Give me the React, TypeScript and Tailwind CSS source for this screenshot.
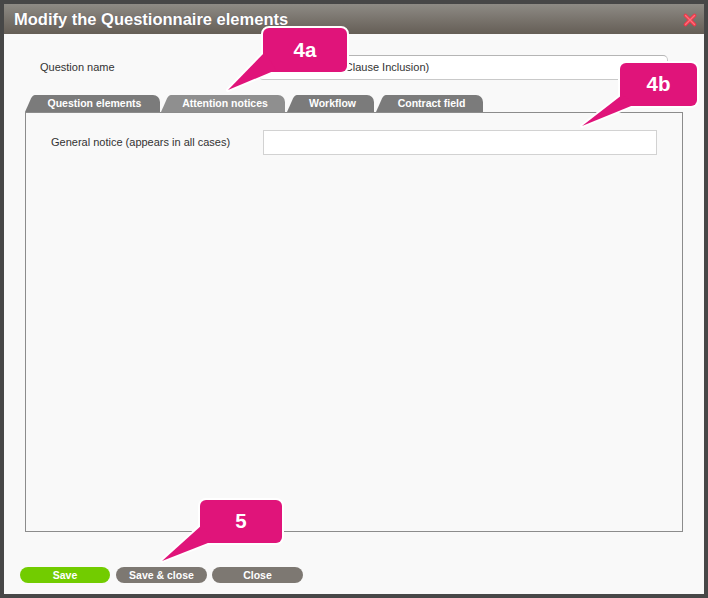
import React from "react";

const MAG = "#e0147a";

function Tab({ label, active, w, ml }: { label: string; active?: boolean; w: string; ml: string }) {
  const color = active ? "#8f8f8f" : "#7b7b7b";
  return (
    <div className={`flex h-[17px] items-end ${ml}`}>
      <svg width="10" height="17" viewBox="0 0 10 17" className="block shrink-0">
        <path d="M0 17 L6 3.5 Q7.6 0 10 0 L10 17 Z" fill={color} />
      </svg>
      <div
        className={`flex h-[17px] ${w} items-center justify-center rounded-tr-[7px] pr-[6px] pt-[1px] text-[10.5px] font-bold text-white ${
          active ? "bg-[#8f8f8f]" : "bg-[#7b7b7b]"
        }`}
      >
        {label}
      </div>
    </div>
  );
}

export default function App() {
  return (
    <div className="relative h-[598px] w-[708px] overflow-hidden bg-[#474747] p-1 font-['Liberation_Sans',Arial,sans-serif]">
      <div className="flex h-full flex-col bg-[#f9f9f9]">
        {/* Title bar */}
        <div className="flex h-[30px] shrink-0 items-center justify-between bg-gradient-to-b from-[#8e8b85] to-[#655e56] pl-[10px] pr-[7px]">
          <span className="pt-[1px] text-[16.5px] font-bold text-white [text-shadow:0_0_1px_rgba(60,60,90,0.6)]">
            Modify the Questionnaire elements
          </span>
          <svg width="14" height="14" viewBox="0 0 14 14" className="mt-[1px]">
            <path d="M2.5 2.5 L11.5 11.5 M11.5 2.5 L2.5 11.5" stroke="#ec3a4a" strokeWidth="3.6" strokeLinecap="round" />
            <path d="M2.5 2.5 L11.5 11.5 M11.5 2.5 L2.5 11.5" stroke="#ff6f7c" strokeWidth="1.4" strokeLinecap="round" />
          </svg>
        </div>

        {/* Body */}
        <div className="flex flex-1 flex-col">
          <div className="mt-[21px] flex h-[25px] items-center">
            <span className="ml-[36px] w-[218px] text-[11px] text-[#333]">Question name</span>
            <div className="flex h-[25px] w-[410px] items-center rounded-[5px] border border-[#c9c9c9] border-t-[#b5b5b5] bg-white pl-[10px] text-[11px] text-[#333]">
              Confidentiality (Clause Inclusion)
            </div>
          </div>

          {/* Tabs */}
          <div className="ml-[21px] mt-[15px] flex h-[17px] items-end">
            <Tab label="Question elements" w="w-[125px]" ml="ml-0" />
            <Tab label="Attention notices" active w="w-[114px]" ml="ml-[1px]" />
            <Tab label="Workflow" w="w-[77px]" ml="ml-[2px]" />
            <Tab label="Contract field" w="w-[97px]" ml="ml-[2px]" />
          </div>

          {/* Panel */}
          <div className="mx-[21px] h-[420px] border border-[#8c8c8c] bg-[#f9f9f9]">
            <div className="mt-[17px] flex h-[25px] items-center">
              <span className="ml-[25px] w-[212px] text-[11px] text-[#333]">General notice (appears in all cases)</span>
              <div className="h-[25px] w-[394px] border border-[#d2d2d2] bg-white" />
            </div>
          </div>

          {/* Buttons */}
          <div className="ml-[16px] mt-[35px] flex h-[16px] items-center gap-[6px]">
            <button className="flex h-[16px] w-[90px] items-center justify-center rounded-full bg-[#72cc00] pt-[1px] text-[10.5px] font-bold text-white">
              Save
            </button>
            <button className="flex h-[16px] w-[91px] items-center justify-center rounded-full bg-[#7d7872] pt-[1px] text-[10.5px] font-bold text-white">
              Save &amp; close
            </button>
            <button className="-ml-[1px] flex h-[16px] w-[91px] items-center justify-center rounded-full bg-[#7d7872] pt-[1px] text-[10.5px] font-bold text-white">
              Close
            </button>
          </div>
        </div>
      </div>

      {/* Callouts overlay */}
      <svg className="pointer-events-none absolute left-0 top-0" width="708" height="598" viewBox="0 0 708 598">
        <g stroke="#ffffff" strokeWidth="4" strokeLinejoin="round" fill="#ffffff">
          <rect x="263" y="28" width="84" height="44" rx="6" />
          <polygon points="265,52 228,90 276,70" />
          <rect x="620" y="63" width="77" height="43" rx="6" />
          <polygon points="622,95 582,126 636,104" />
          <rect x="200" y="500" width="82" height="43" rx="6" />
          <polygon points="202,525 162,561 213,541" />
        </g>
        <g fill={MAG}>
          <rect x="263" y="28" width="84" height="44" rx="6" />
          <polygon points="265,52 228,90 276,70" />
          <rect x="620" y="63" width="77" height="43" rx="6" />
          <polygon points="622,95 582,126 636,104" />
          <rect x="200" y="500" width="82" height="43" rx="6" />
          <polygon points="202,525 162,561 213,541" />
        </g>
      </svg>
      <div className="pointer-events-none absolute left-[263px] top-[28px] flex h-[44px] w-[84px] items-center justify-center text-[20.5px] font-bold text-white">
        4a
      </div>
      <div className="pointer-events-none absolute left-[620px] top-[63px] flex h-[43px] w-[77px] items-center justify-center text-[20.5px] font-bold text-white">
        4b
      </div>
      <div className="pointer-events-none absolute left-[200px] top-[500px] flex h-[43px] w-[82px] items-center justify-center text-[20.5px] font-bold text-white">
        5
      </div>
    </div>
  );
}
